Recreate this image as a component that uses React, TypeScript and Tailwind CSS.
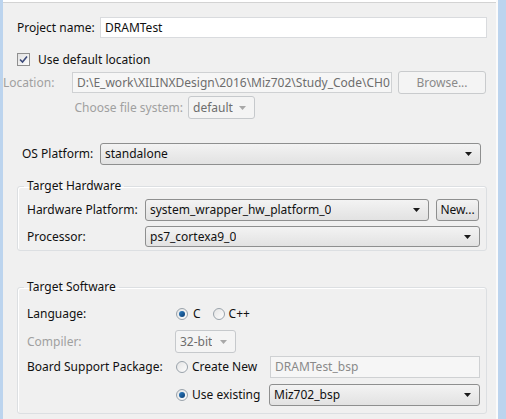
import React from 'react';

const font = { fontFamily: '"Noto Sans", "Open Sans", sans-serif' };

function Arrow({ disabled }: { disabled?: boolean }) {
  return (
    <svg width="7" height="4" viewBox="0 0 7 4" className="shrink-0">
      <path d="M0 0 H7 L3.5 4 Z" fill={disabled ? '#a8a8a8' : '#1a1a1a'} />
    </svg>
  );
}

function Combo({ value, className, disabled }: { value: string; className: string; disabled?: boolean }) {
  return (
    <div
      className={
        'flex items-center justify-between pl-[4px] pr-[8px] rounded-[3px] border ' +
        (disabled
          ? 'border-[#c6c9cc] bg-[#f4f4f4] text-[#6d6d6d] '
          : 'border-[#8e8f8f] bg-gradient-to-b from-[#f3f3f3] to-[#e2e2e2] text-[#111] ') +
        className
      }
    >
      <span className="truncate">{value}</span>
      <Arrow disabled={disabled} />
    </div>
  );
}

function TextBox({ value, className, disabled }: { value: string; className: string; disabled?: boolean }) {
  return (
    <div
      className={
        'flex items-center pl-[4px] border overflow-hidden ' +
        (disabled ? 'border-[#cfd1d3] bg-[#f6f6f6] text-[#8a8a8a] ' : 'border-[#d9dbde] bg-white text-[#111] ') +
        className
      }
    >
      {value}
    </div>
  );
}

function Button({ label, className, disabled }: { label: string; className: string; disabled?: boolean }) {
  return (
    <div
      className={
        'flex items-center justify-center rounded-[3px] border ' +
        (disabled
          ? 'border-[#c9cbcd] bg-[#f4f4f4] text-[#8a8a8a] '
          : 'border-[#8e8f8f] bg-gradient-to-b from-[#f3f3f3] to-[#dedede] text-[#111] ') +
        className
      }
    >
      {label}
    </div>
  );
}

function Radio({ checked }: { checked?: boolean }) {
  return (
    <span className="w-[12px] h-[12px] rounded-full border border-[#9aa3ab] bg-gradient-to-br from-[#e4e4e4] to-[#fdfdfd] flex items-center justify-center shrink-0">
      {checked && <span className="w-[6px] h-[6px] rounded-full bg-gradient-to-br from-[#2c7fc4] to-[#0d3e73]" />}
    </span>
  );
}

function Group({ title, className, children }: { title: string; className: string; children: React.ReactNode }) {
  return (
    <fieldset
      className={
        'ml-[14px] w-[470px] border border-[#dcdfe2] rounded-[3px] shadow-[inset_1px_1px_0_#ffffff] ' + className
      }
    >
      <legend className="ml-[6px] px-[3px] text-[#111] leading-[14px]">{title}</legend>
      {children}
    </fieldset>
  );
}

export default function App() {
  return (
    <div className="flex w-[506px] h-[419px] bg-[#bcd4ee] text-[12px] text-[#111] whitespace-nowrap" style={font}>
      <div className="w-[3px] shrink-0" />
      <div className="w-[495px] flex flex-col bg-[#f0f0f0] border-r-[2px] border-[#fbfbfb] overflow-hidden">
        <div className="h-[3px] bg-white border-b border-[#d3d3d3] shrink-0" />

        <div className="flex items-center mt-[14px]">
          <span className="w-[97px] pl-[14px]">Project name:</span>
          <TextBox value="DRAMTest" className="w-[387px] h-[21px]" />
        </div>

        <div className="flex items-center mt-[15px] pl-[14px] h-[13px]">
          <span className="w-[13px] h-[13px] border border-[#8f8f8f] bg-gradient-to-br from-[#e2e2e2] to-[#fcfcfc] flex items-center justify-center">
            <svg width="9" height="9" viewBox="0 0 9 9">
              <path d="M1 4.5 L3.5 7 L8 1.5" stroke="#3c4a7a" strokeWidth="1.6" fill="none" />
            </svg>
          </span>
          <span className="ml-[8px]">Use default location</span>
        </div>

        <div className="flex items-center mt-[5px]">
          <span className="w-[69px] text-[#a0a0a0]">Location:</span>
          <TextBox value="D:\E_work\XILINXDesign\2016\Miz702\Study_Code\CH0" disabled className="w-[320px] h-[21px] !text-[#6d6d6d]" />
          <Button label="Browse..." disabled className="ml-[6px] w-[88px] h-[23px]" />
        </div>

        <div className="flex items-center mt-[2px]">
          <span className="w-[185px] pr-[5px] text-right text-[#a0a0a0]">Choose file system:</span>
          <Combo value="default" disabled className="w-[67px] h-[23px]" />
        </div>

        <div className="flex items-center mt-[24px]">
          <span className="w-[97px] pl-[19px]">OS Platform:</span>
          <Combo value="standalone" className="w-[381px] h-[22px]" />
        </div>

        <Group title="Target Hardware" className="mt-[14px] h-[72px]">
          <div className="flex items-center mt-[6px]">
            <span className="w-[127px] pl-[9px]">Hardware Platform:</span>
            <Combo value="system_wrapper_hw_platform_0" className="w-[284px] h-[22px]" />
            <Button label="New..." className="ml-[7px] w-[43px] h-[22px]" />
          </div>
          <div className="flex items-center mt-[5px]">
            <span className="w-[127px] pl-[9px]">Processor:</span>
            <Combo value="ps7_cortexa9_0" className="w-[335px] h-[21px]" />
          </div>
        </Group>

        <Group title="Target Software" className="mt-[29px] h-[134px]">
          <div className="flex items-center mt-[12px] h-[16px]">
            <span className="w-[158px] pl-[9px]">Language:</span>
            <Radio checked />
            <span className="ml-[5px]">C</span>
            <span className="ml-[12px]"><Radio /></span>
            <span className="ml-[4px]">C++</span>
          </div>
          <div className="flex items-center mt-[8px]">
            <span className="w-[157px] pl-[9px] text-[#a0a0a0]">Compiler:</span>
            <Combo value="32-bit" disabled className="w-[61px] h-[23px]" />
          </div>
          <div className="flex items-center mt-[3px]">
            <span className="w-[158px] pl-[9px]">Board Support Package:</span>
            <Radio />
            <span className="ml-[4px] w-[78px]">Create New</span>
            <TextBox value="DRAMTest_bsp" disabled className="w-[210px] h-[22px]" />
          </div>
          <div className="flex items-center mt-[6px]">
            <span className="w-[158px]" />
            <Radio checked />
            <span className="ml-[4px] w-[77px]">Use existing</span>
            <Combo value="Miz702_bsp" className="w-[211px] h-[22px]" />
          </div>
        </Group>
      </div>
    </div>
  );
}
